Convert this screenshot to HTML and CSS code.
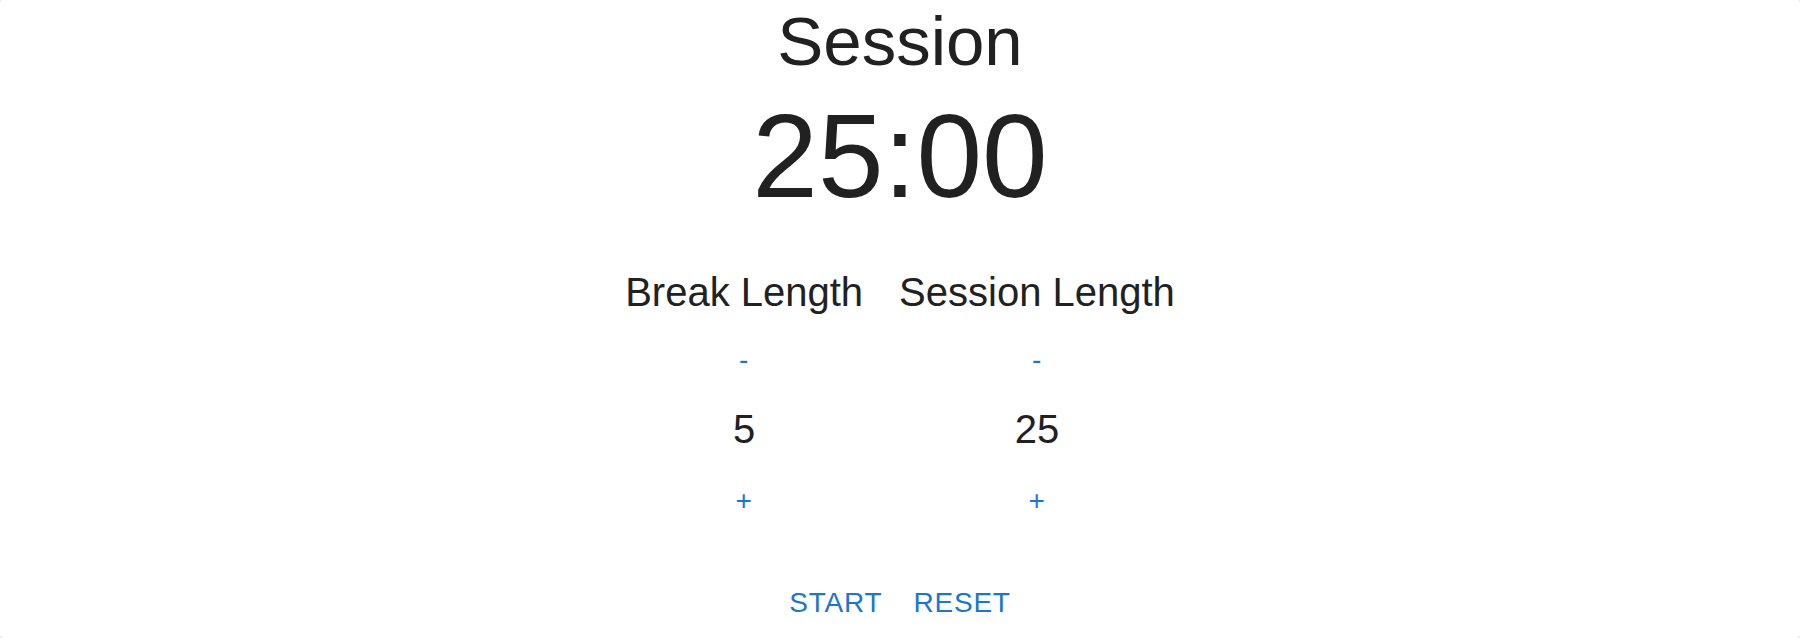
FILE: index.html
```html
<!DOCTYPE html>
<html lang="en">
<head>
<meta charset="utf-8">
<title>Pomodoro Clock</title>
<link rel="stylesheet" href="styles.css">
</head>
<body>
  <main class="card">
    <h2 class="timer-label">Session</h2>
    <div class="time-left">25:00</div>
    <section class="settings">
      <div class="setting">
        <div class="setting-label">Break Length</div>
        <button class="btn step minus" type="button">-</button>
        <div class="setting-value">5</div>
        <button class="btn step plus" type="button">+</button>
      </div>
      <div class="setting">
        <div class="setting-label">Session Length</div>
        <button class="btn step minus" type="button">-</button>
        <div class="setting-value">25</div>
        <button class="btn step plus" type="button">+</button>
      </div>
    </section>
    <div class="controls">
      <button class="btn action" type="button">START</button>
      <button class="btn action" type="button">RESET</button>
    </div>
  </main>
</body>
</html>
```
FILE: styles.css
```css
html, body {
  margin: 0;
  padding: 0;
  height: 100%;
}

body {
  background: #e9e9e9;
  font-family: "Liberation Sans", Arial, Helvetica, sans-serif;
  color: #212121;
}

.card {
  box-sizing: border-box;
  height: 100vh;
  background: #ffffff;
  border-radius: 4px;
  display: flex;
  flex-direction: column;
  align-items: center;
  padding-top: 2px;
}

.timer-label {
  margin: 0;
  font-weight: 400;
  font-size: 69px;
  line-height: 80px;
}

.time-left {
  margin-top: 4px;
  font-size: 118px;
  line-height: 140px;
}

.settings {
  margin-top: 42px;
  display: flex;
  gap: 36px;
}

.setting {
  display: flex;
  flex-direction: column;
  align-items: center;
}

.setting-label {
  font-size: 40px;
  line-height: 48px;
}

.setting-value {
  margin-top: 25px;
  font-size: 40px;
  line-height: 48px;
}

.btn {
  font-family: "Liberation Sans", Arial, Helvetica, sans-serif;
  background: none;
  border: none;
  padding: 0;
  color: #1976d2;
  font-size: 28px;
  line-height: 40px;
  letter-spacing: 0.8px;
  cursor: pointer;
}

.step.minus {
  margin-top: 24px;
}

.step.plus {
  margin-top: 28px;
}

.controls {
  margin-top: 62px;
  display: flex;
  gap: 31px;
}
```
